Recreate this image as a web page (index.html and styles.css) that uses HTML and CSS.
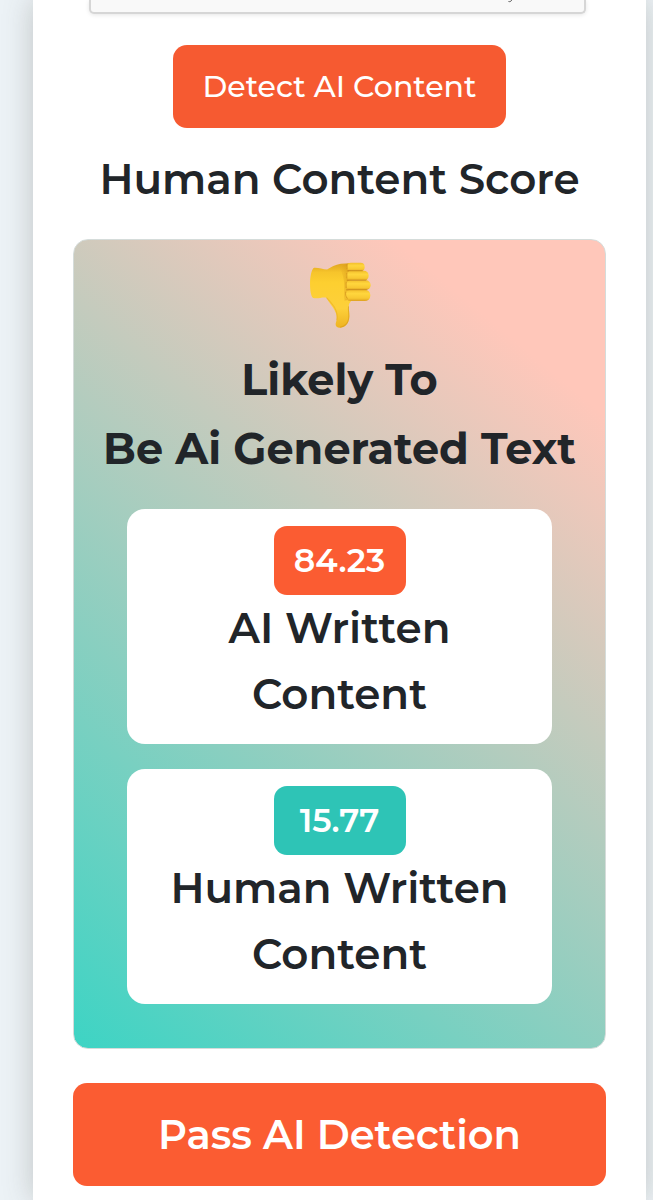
FILE: index.html
```html
<!DOCTYPE html>
<html lang="en">
<head>
<meta charset="utf-8">
<meta name="viewport" content="width=device-width, initial-scale=1">
<title>Human Content Score</title>
<link rel="stylesheet" href="styles.css">
</head>
<body>
<main class="sheet">
  <div class="captcha">
    <svg class="captcha-mark" viewBox="0 0 6 3" aria-hidden="true"><path d="M4.6 0C4.1 1.5 3.2 1.9 1.5 1.5" fill="none" stroke="#555" stroke-width="1"/></svg>
  </div>
  <button class="detect" type="button">Detect AI Content</button>
  <h1 class="title">Human Content Score</h1>
  <section class="result">
    <svg class="thumb" viewBox="56 51 185 199" role="img" aria-label="Thumbs down">
      <defs>
        <linearGradient id="skin" x1="0" y1="0" x2="0" y2="1">
          <stop offset="0" stop-color="#dfa31f"/>
          <stop offset=".14" stop-color="#f6c42b"/>
          <stop offset=".3" stop-color="#fdcf30"/>
          <stop offset=".7" stop-color="#fdd03a"/>
          <stop offset="1" stop-color="#eeb321"/>
        </linearGradient>
        <linearGradient id="finger" x1="0" y1="0" x2="0" y2="1">
          <stop offset="0" stop-color="#f3bf2c"/>
          <stop offset=".35" stop-color="#ffd63d"/>
          <stop offset=".75" stop-color="#f8c832"/>
          <stop offset="1" stop-color="#dd9f20"/>
        </linearGradient>
        <linearGradient id="shade" x1="0" y1="0" x2="1" y2="0">
          <stop offset="0" stop-color="#e0a41f" stop-opacity="0"/>
          <stop offset="1" stop-color="#d3921a" stop-opacity=".7"/>
        </linearGradient>
      </defs>
      <path d="M71 68C84 67 97 73 110 73C122 67 134 58 151 56L177 54L188 160C181 168 175 172 175 181C174 192 178 204 176 218C174 234 166 245 150 247C137 248 133 240 137 229C141 216 138 205 132 194C125 181 116 172 108 157C94 155 82 161 69 158C55 152 56 76 71 68Z" fill="url(#skin)"/>
      <path d="M145 65L174 54L180 162L162 166C158 135 169 104 145 65Z" fill="url(#shade)"/>
      <path d="M108 157C122 172 145 193 139 224" fill="none" stroke="#e9ac1e" stroke-width="3" opacity=".6"/>
      <path d="M174 183C172 196 177 207 174 222C171 235 162 243 149 245" fill="none" stroke="#d99b19" stroke-width="3" opacity=".65"/>
      <rect x="169" y="53" width="53" height="25" rx="12" fill="url(#finger)"/>
      <rect x="168" y="77" width="66" height="29" rx="14" fill="url(#finger)"/>
      <rect x="166" y="105" width="74" height="29" rx="14" fill="url(#finger)"/>
      <rect x="164" y="133" width="75" height="34" rx="16" fill="url(#finger)"/>
      <path d="M171 77H216M169 105H227M167 133H230" fill="none" stroke="#b97717" stroke-width="3" opacity=".6"/>
      <path d="M170 57V72M169 83V99M167 111V128M166 140Q163 152 171 160" fill="none" stroke="#c98516" stroke-width="3" opacity=".6"/>
    </svg>
    <h2 class="verdict">Likely To<br>Be Ai Generated Text</h2>
    <div class="score">
      <span class="badge badge-ai">84.23</span>
      <p class="label">AI Written<br>Content</p>
    </div>
    <div class="score">
      <span class="badge badge-human">15.77</span>
      <p class="label">Human Written<br>Content</p>
    </div>
  </section>
  <button class="pass" type="button">Pass AI Detection</button>
</main>
</body>
</html>
```
FILE: styles.css
```css
* { box-sizing: border-box; }

body {
  margin: 0;
  background: #ecf2f6;
  color: #212529;
  font-family: Montserrat, Inter, "Liberation Sans", sans-serif;
  overflow-x: hidden;
}

.sheet {
  display: flex;
  flex-direction: column;
  margin: 0 7px 0 33px;
  padding: 0 40px 14px;
  background: #fff;
  box-shadow: 0 0 28px rgba(80, 80, 70, .28);
}

.captcha {
  display: flex;
  justify-content: flex-end;
  align-items: flex-start;
  height: 14px;
  margin: 0 20px 0 16px;
  padding-right: 71px;
  background: #f9f9f9;
  border: 2px solid #d6d6d6;
  border-top: 0;
  border-radius: 0 0 5px 5px;
  box-shadow: 0 1px 4px rgba(0, 0, 0, .1);
}

.captcha-mark { width: 6px; height: 3px; }

button {
  border: 0;
  border-radius: 14px;
  color: #fff;
  font-family: inherit;
  cursor: pointer;
}

.detect {
  align-self: center;
  margin-top: 31px;
  padding: 21px 30px;
  background: #f65a31;
  font-size: 30px;
  font-weight: 500;
  line-height: 41px;
}

.title {
  margin: 21px 0 0;
  font-size: 42px;
  font-weight: 600;
  line-height: 60px;
  text-align: center;
  white-space: nowrap;
}

.result {
  display: flex;
  flex-direction: column;
  align-items: center;
  margin-top: 30px;
  padding: 22px 28px 44px;
  border: 1px solid #d5dcda;
  border-radius: 15px;
  background: linear-gradient(40deg, #3dd4c4 0%, #ffc7ba 86%);
}

.thumb { width: 62px; height: 67px; }

.verdict {
  margin: 16px 0 26px;
  font-size: 43px;
  font-weight: 700;
  line-height: 69px;
  text-align: center;
  white-space: nowrap;
}

.score {
  display: flex;
  flex-direction: column;
  align-items: center;
  align-self: stretch;
  margin: 0 25px;
  padding: 17px 16px;
  border-radius: 18px;
  background: #fff;
}

.score + .score { margin-top: 25px; }

.badge {
  min-width: 132px;
  padding: 0 20px;
  border-radius: 13px;
  color: #fff;
  font-size: 33px;
  font-weight: 600;
  line-height: 69px;
  text-align: center;
}

.badge-ai { background: #fb5c32; }
.badge-human { background: #2ec4b6; }

.label {
  margin: 0;
  font-size: 42px;
  font-weight: 600;
  line-height: 66px;
  text-align: center;
}

.pass {
  margin-top: 34px;
  padding: 26px 16px;
  background: #fb5c32;
  font-size: 40px;
  font-weight: 600;
  line-height: 51px;
}
```
